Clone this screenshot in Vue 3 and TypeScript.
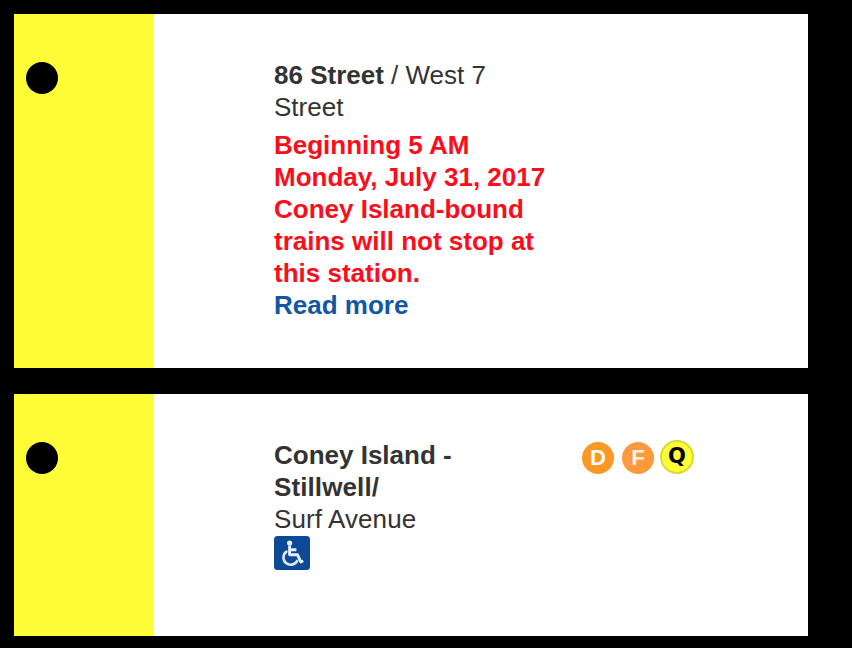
<script setup lang="ts">
interface Run {
  text: string
  bold?: boolean
}

interface Route {
  letter: string
  kind: 'orange' | 'orange light' | 'yellow'
}

interface Station {
  id: string
  name: Run[][]
  alert: string[]
  accessible: boolean
  routes: Route[]
}

const stations: Station[] = [
  {
    id: 'street-86',
    name: [
      [{ text: '86 Street', bold: true }, { text: ' / West 7' }],
      [{ text: 'Street' }],
    ],
    alert: [
      'Beginning 5 AM',
      'Monday, July 31, 2017',
      'Coney Island-bound',
      'trains will not stop at',
      'this station.',
    ],
    accessible: false,
    routes: [],
  },
  {
    id: 'coney-island',
    name: [
      [{ text: 'Coney Island -', bold: true }],
      [{ text: 'Stillwell/', bold: true }],
      [{ text: 'Surf Avenue' }],
    ],
    alert: [],
    accessible: true,
    routes: [
      { letter: 'D', kind: 'orange' },
      { letter: 'F', kind: 'orange light' },
      { letter: 'Q', kind: 'yellow' },
    ],
  },
]
</script>

<template>
  <main class="page">
    <article v-for="s in stations" :key="s.id" class="card" :class="s.id">
      <div class="line"><span class="stop"></span></div>
      <div class="info">
        <div v-for="(row, i) in s.name" :key="i" class="row">
          <span v-for="(run, j) in row" :key="j" :class="{ bold: run.bold }">{{ run.text }}</span>
        </div>
        <div v-if="s.alert.length" class="alert">
          <div v-for="text in s.alert" :key="text" class="row">{{ text }}</div>
          <a class="more">Read more</a>
        </div>
        <svg v-if="s.accessible" class="access" viewBox="0 0 36 34" aria-label="Accessible">
          <rect width="36" height="34" rx="3.5" fill="#0c4a98" />
          <circle cx="15.6" cy="7" r="2.6" fill="#e8f0fa" />
          <path
            d="M15.6 9.5V18.8H23.6L26.8 26L29.2 24.8M15.8 13.8H22.4"
            fill="none" stroke="#e8f0fa" stroke-width="2.9" stroke-linejoin="round"
          />
          <path
            d="M12.4 15.6A7.3 7.3 0 1 0 23.2 24.9"
            fill="none" stroke="#dce8f6" stroke-width="2.6" stroke-linecap="round"
          />
        </svg>
      </div>
      <div class="routes">
        <span v-for="r in s.routes" :key="r.letter" class="route" :class="r.kind">{{ r.letter }}</span>
      </div>
    </article>
  </main>
</template>

<style>
body {
  background: #000;
}
</style>

<style scoped>
.page {
  box-sizing: border-box;
  width: 852px;
  height: 648px;
  padding: 14px 44px 12px 14px;
  display: flex;
  flex-direction: column;
  gap: 26px;
  background: #000;
  font-family: 'Liberation Sans', Arial, sans-serif;
  font-size: 26px;
  line-height: 32px;
  color: #333;
}
.card {
  display: grid;
  grid-template-columns: 140px 420px 1fr;
  background: #fff;
}
.street-86 {
  height: 354px;
}
.coney-island {
  height: 242px;
}
.line {
  background: #fffd38;
  padding: 48px 12px 0;
}
.stop {
  display: block;
  width: 32px;
  height: 32px;
  border-radius: 50%;
  background: #000;
}
.info {
  padding: 45px 0 0 120px;
}
.row {
  white-space: pre;
}
.coney-island .row:not(:first-child) {
  letter-spacing: 0.1px;
}
.bold,
.alert {
  font-weight: 700;
}
.alert {
  margin-top: 6px;
  color: #fc0d1b;
}
.more {
  display: block;
  color: #1256a4;
}
.access {
  display: block;
  width: 36px;
  height: 34px;
  margin-top: 1px;
}
.routes {
  display: flex;
  align-items: flex-start;
  gap: 8px;
  padding: 48px 0 0 8px;
}
.route {
  box-sizing: border-box;
  width: 32px;
  height: 32px;
  border-radius: 50%;
  text-align: center;
  font: 700 22px/32px 'Liberation Sans', Arial, sans-serif;
}
.orange {
  background: #fd9827;
  color: #fff;
}
.light {
  background: #fd9a3e;
  color: #fff4e8;
}
.yellow {
  width: 34px;
  height: 34px;
  margin: -2px 0 0 -2px;
  border: 2px solid #d9d92f;
  background: #fffd38;
  color: #000;
  font: 700 21px/29px 'DejaVu Sans', sans-serif;
}
</style>
